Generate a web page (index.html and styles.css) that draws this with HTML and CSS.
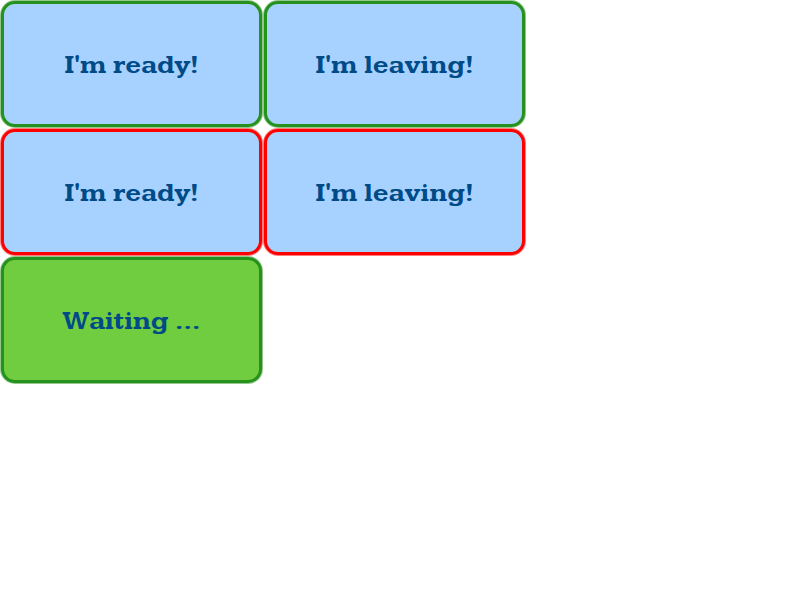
FILE: index.html
```html
<!DOCTYPE html>
<html lang="en">
<head>
<meta charset="utf-8">
<title>Ready buttons</title>
<link rel="stylesheet" href="styles.css">
</head>
<body>
<main class="panel">
  <div class="row">
    <button class="btn" type="button">I'm ready!</button>
    <button class="btn" type="button">I'm leaving!</button>
  </div>
  <div class="row">
    <button class="btn btn-alert" type="button">I'm ready!</button>
    <button class="btn btn-alert" type="button">I'm leaving!</button>
  </div>
  <div class="row">
    <button class="btn btn-waiting" type="button">Waiting ...</button>
  </div>
</main>
</body>
</html>
```
FILE: styles.css
```css
body {
  margin: 0;
  background: #fff;
}

.panel {
  display: flex;
  flex-direction: column;
}

.row {
  display: flex;
  flex-wrap: wrap;
}

.btn {
  --edge: #26921d;
  box-sizing: border-box;
  width: 261px;
  height: 126px;
  margin: 1px;
  padding: 2px 16px 0;
  border: 3px solid var(--edge);
  border-radius: 14px;
  box-shadow: 0 0 0 1px color-mix(in srgb, var(--edge) 50%, transparent);
  background: #a7d2ff;
  color: #004b87;
  font: bold 27px/32px "Kameron", "Arvo", "DejaVu Serif", serif;
  font-kerning: none;
}

.btn-alert {
  --edge: #f00;
}

.btn-waiting {
  background: #71cd40;
}
```
